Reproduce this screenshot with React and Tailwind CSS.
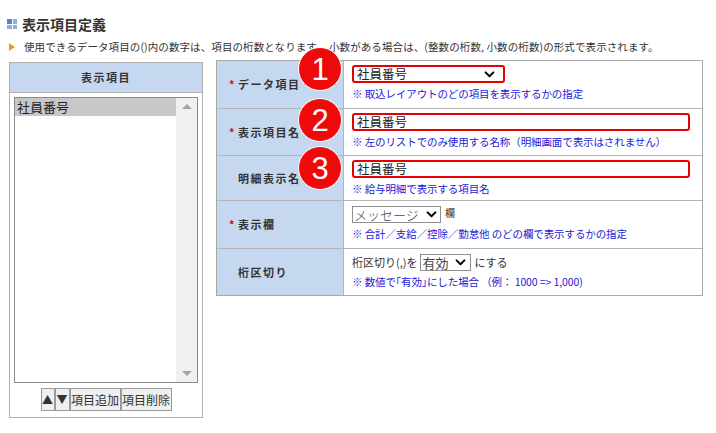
import React from "react";

const JP = { fontFamily: '"Noto Sans CJK JP", "Noto Sans", sans-serif' };

function Chevron({ className = "" }) {
  return (
    <svg viewBox="0 0 12 8" className={className} width="11" height="7">
      <path d="M1.5 1.5 L6 6 L10.5 1.5" fill="none" stroke="#000" strokeWidth="2.2" strokeLinecap="round" strokeLinejoin="round" />
    </svg>
  );
}

function Badge({ n, top }) {
  return (
    <div
      className="absolute left-[298px] w-[44px] h-[44px] rounded-full bg-[#ee0a0a] border border-white flex items-center justify-center text-white text-[31px] leading-none"
      style={{ top, fontFamily: '"Liberation Sans", Arial, sans-serif' }}
    >
      {n}
    </div>
  );
}

function Row({ label, req, h, children, last }) {
  return (
    <div className={`grid grid-cols-[127px_1fr] ${last ? "" : "border-b border-[#b4b4b4]"}`} style={{ height: h }}>
      <div className="bg-[#c6d8ef] border-r border-[#b4b4b4] flex items-center pl-[12px] text-[11px] font-bold text-[#333] tracking-[1.5px]">
        <span className={`w-[9px] text-[#e00] ${req ? "" : "invisible"}`}>*</span>
        <span>{label}</span>
      </div>
      <div className="pl-[8px] pt-[4px] flex flex-col">{children}</div>
    </div>
  );
}

function Note({ children }) {
  return <div className="text-[10.5px] text-[#1a1ad6] mt-[4px] leading-[14px] tracking-[-0.1px]">{children}</div>;
}

export default function App() {
  return (
    <div className="w-[716px] h-[433px] bg-white relative text-[#333]" style={JP}>
      <div className="flex items-center pt-[14px] pl-[7px]">
        <div className="grid grid-cols-2 gap-[1px] w-[10px] h-[10px] mr-[5px]">
          <div className="bg-[#4f86c6]" />
          <div className="bg-[#8db0dc]" />
          <div className="bg-[#8db0dc]" />
          <div className="bg-[#8db0dc]" />
        </div>
        <div className="text-[14px] font-bold leading-[20px] text-[#333]">表示項目定義</div>
      </div>
      <div className="flex items-center pl-[9px] mt-[5px] h-[16px]">
        <div className="w-0 h-0 border-y-[4px] border-y-transparent border-l-[6px] border-l-[#f09a1a] mr-[9px]" />
        <div className="text-[10.5px] text-[#333] leading-[14px] tracking-[0.1px]">
          使用できるデータ項目の()内の数字は、項目の桁数となります。 小数がある場合は、(整数の桁数, 小数の桁数)の形式で表示されます。
        </div>
      </div>

      <div className="flex items-start pl-[9px] mt-[5px] gap-[13px]">
        {/* left panel */}
        <div className="w-[194px] h-[356px] mt-[2px] border border-[#b0b0b0] flex flex-col">
          <div className="h-[30px] bg-[#c6d8ef] border-b border-[#b0b0b0] flex items-center justify-center text-[11px] font-bold tracking-[1.5px] text-[#333]">
            表示項目
          </div>
          <div className="mx-[4px] mt-[4px] h-[286px] border border-[#8a8a8a] flex">
            <div className="flex-1">
              <div className="h-[18px] bg-[#c8c8c8] text-[13px] leading-[18px] pl-[2px] text-[#222]">社員番号</div>
            </div>
            <div className="w-[21px] bg-[#f0f0f0] flex flex-col justify-between items-center py-[6px]">
              <div className="w-0 h-0 border-x-[5px] border-x-transparent border-b-[5px] border-b-[#a3a3a3]" />
              <div className="w-0 h-0 border-x-[5px] border-x-transparent border-t-[5px] border-t-[#a3a3a3]" />
            </div>
          </div>
          <div className="flex justify-center mt-[5px] h-[23px]">
            <button className="w-[14px] h-[23px] border border-[#9a9a9a] bg-[#efefef] text-[11px] leading-none flex items-center justify-center">▲</button>
            <button className="w-[15px] h-[23px] border border-[#9a9a9a] bg-[#efefef] text-[11px] leading-none flex items-center justify-center">▼</button>
            <button className="w-[51px] h-[23px] border border-[#9a9a9a] bg-[#efefef] text-[12px] leading-none flex items-center justify-center">項目追加</button>
            <button className="w-[51px] h-[23px] border border-[#9a9a9a] bg-[#efefef] text-[12px] leading-none flex items-center justify-center">項目削除</button>
          </div>
        </div>

        {/* right table */}
        <div className="w-[487px] border border-[#a8a8a8]">
          <Row label="データ項目" req h={48}>
            <div className="w-[153px] h-[18px] border-2 border-[#e60000] rounded-[3px] flex items-center justify-between pl-[3px] pr-[8px] text-[12.5px] text-[#222]">
              <span>社員番号</span>
              <Chevron />
            </div>
            <Note>※ 取込レイアウトのどの項目を表示するかの指定</Note>
          </Row>
          <Row label="表示項目名" req h={47}>
            <div className="w-[338px] h-[18px] border-2 border-[#e60000] rounded-[3px] flex items-center pl-[3px] text-[12.5px] text-[#222]">社員番号</div>
            <Note>※ 左のリストでのみ使用する名称（明細画面で表示はされません）</Note>
          </Row>
          <Row label="明細表示名" h={45}>
            <div className="w-[338px] h-[18px] border-2 border-[#e60000] rounded-[3px] flex items-center pl-[3px] text-[12.5px] text-[#222]">社員番号</div>
            <Note>※ 給与明細で表示する項目名</Note>
          </Row>
          <Row label="表示欄" req h={48}>
            <div className="flex items-center mt-[1px]">
              <div className="w-[89px] h-[17px] border border-[#8f8f8f] flex items-center justify-between pl-[1px] pr-[3px] text-[13px] text-[#444] leading-none">
                <span className="font-light">メッセージ</span>
                <Chevron />
              </div>
              <span className="ml-[4px] text-[10px] text-[#333] -mt-[4px]">欄</span>
            </div>
            <Note>※ 合計／支給／控除／勤怠他 のどの欄で表示するかの指定</Note>
          </Row>
          <Row label="桁区切り" h={46} last>
            <div className="flex items-center text-[11px] text-[#333] mt-[1px]">
              <span>桁区切り(,)を</span>
              <div className="ml-[2px] w-[51px] h-[17px] border border-[#8f8f8f] flex items-center justify-between pl-[2px] pr-[4px] text-[13px] text-[#444] leading-none">
                <span>有効</span>
                <Chevron />
              </div>
              <span className="ml-[4px]">にする</span>
            </div>
            <Note>※ 数値で｢有効｣にした場合 （例： 1000 =&gt; 1,000)</Note>
          </Row>
        </div>
      </div>

      <Badge n="1" top={47} />
      <Badge n="2" top={98} />
      <Badge n="3" top={146} />
    </div>
  );
}
